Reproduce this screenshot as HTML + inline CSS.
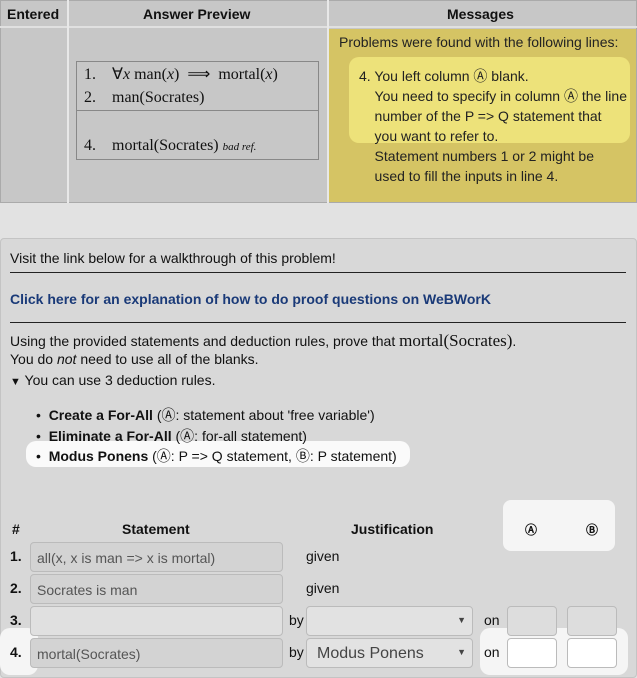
<!DOCTYPE html>
<html><head><style>
*{box-sizing:border-box;margin:0;padding:0}
body{width:637px;height:678px;overflow:hidden;background:#e2e2e2;font-family:"Liberation Sans",sans-serif;font-size:14px;color:#111;position:relative}
.a{position:absolute;white-space:nowrap}
.serif{font-family:"Liberation Serif",serif}
.inp{position:absolute;height:30px;border:1px solid #bbb;border-radius:4px;background:#d3d3d3;color:#555;font-size:14px;padding:7px 6px;line-height:16px}
.sel{position:absolute;height:30px;border:1px solid #bbb;border-radius:4px;background:#e2e2e2;padding:6px 10px;font-size:16px;color:#444}
.sel:after{content:"▼";position:absolute;right:6px;top:8px;font-size:9px;color:#444}
.box{position:absolute;width:50px;height:30px;border:1px solid #bbb;border-radius:4px;background:#ddd}
</style></head><body>
<div class="a" style="left:0;top:0;width:637px;height:203px;background:#c7c7c7;border:1px solid #aaa"></div>
<div class="a" style="left:0;top:0;width:637px;height:28px;border-bottom:2px solid #e0e0e0"></div>
<div class="a" style="left:67px;top:0;width:2px;height:203px;background:#e8e8e8"></div>
<div class="a" style="left:327px;top:0;width:2px;height:203px;background:#e8e8e8"></div>
<div class="a" style="left:329px;top:29px;width:307px;height:173px;background:#d5c464"></div>
<div class="a" style="left:7px;top:6px;font-weight:bold">Entered</div>
<div class="a" style="left:143px;top:6px;font-weight:bold">Answer Preview</div>
<div class="a" style="left:447px;top:6px;font-weight:bold">Messages</div>
<div class="a" style="left:76px;top:61px;width:243px;height:99px;border:1px solid #888"></div>
<div class="a" style="left:76px;top:110px;width:243px;height:1px;background:#888"></div>
<div class="a serif" style="left:84px;top:64px;font-size:16px">1.&nbsp;&nbsp;&nbsp;&nbsp;∀<i>x</i> man(<i>x</i>) &nbsp;⟹&nbsp; mortal(<i>x</i>)</div>
<div class="a serif" style="left:84px;top:89px;font-size:16px">2.&nbsp;&nbsp;&nbsp;&nbsp;man(Socrates)</div>
<div class="a serif" style="left:84px;top:137px;font-size:16px">4.&nbsp;&nbsp;&nbsp;&nbsp;mortal(Socrates) <i style="font-size:11px">bad ref.</i></div>
<div class="a" style="left:339px;top:34px;font-size:14px;color:#222">Problems were found with the following lines:</div>
<div class="a" style="left:349px;top:57px;width:281px;height:86px;background:#ede27a;border-radius:10px"></div>
<div class="a" style="left:359px;top:66px;font-size:14px;line-height:20px;color:#222">4. You left column Ⓐ blank.<br>&nbsp;&nbsp;&nbsp;&nbsp;You need to specify in column Ⓐ the line<br>&nbsp;&nbsp;&nbsp;&nbsp;number of the P =&gt; Q statement that<br>&nbsp;&nbsp;&nbsp;&nbsp;you want to refer to.<br>&nbsp;&nbsp;&nbsp;&nbsp;Statement numbers 1 or 2 might be<br>&nbsp;&nbsp;&nbsp;&nbsp;used to fill the inputs in line 4.</div>
<div class="a" style="left:0;top:238px;width:637px;height:440px;background:#d8d8d8;border:1px solid #c4c4c4;border-radius:4px"></div>
<div class="a" style="left:10px;top:250px">Visit the link below for a walkthrough of this problem!</div>
<div class="a" style="left:10px;top:272px;width:616px;height:1px;background:#222"></div>
<div class="a" style="left:10px;top:291px;font-weight:bold;color:#1a3a78">Click here for an explanation of how to do proof questions on WeBWorK</div>
<div class="a" style="left:10px;top:322px;width:616px;height:1px;background:#222"></div>
<div class="a" style="left:10px;top:331px">Using the provided statements and deduction rules, prove that <span class="serif" style="font-size:17px">mortal(Socrates)</span>.</div>
<div class="a" style="left:10px;top:351px">You do <i>not</i> need to use all of the blanks.</div>
<div class="a" style="left:10px;top:372px"><span style="font-size:11px">▼</span> You can use 3 deduction rules.</div>
<div class="a" style="left:26px;top:441px;width:384px;height:26px;background:#fafafa;border-radius:10px"></div>
<div class="a" style="left:36px;top:405px;line-height:20.5px">•&nbsp;&nbsp;<b>Create a For-All</b> (Ⓐ: statement about 'free variable')<br>•&nbsp;&nbsp;<b>Eliminate a For-All</b> (Ⓐ: for-all statement)<br>•&nbsp;&nbsp;<b>Modus Ponens</b> (Ⓐ: P =&gt; Q statement, Ⓑ: P statement)</div>
<div class="a" style="left:503px;top:500px;width:112px;height:51px;background:#f5f5f5;border-radius:8px"></div>
<div class="a" style="left:480px;top:628px;width:148px;height:47px;background:#f5f5f5;border-radius:10px"></div>
<div class="a" style="left:0;top:628px;width:38px;height:47px;background:#f5f5f5;border-radius:10px"></div>
<div class="a" style="left:12px;top:521px;font-weight:bold">#</div>
<div class="a" style="left:122px;top:521px;font-weight:bold">Statement</div>
<div class="a" style="left:351px;top:521px;font-weight:bold">Justification</div>
<div class="a" style="left:525px;top:521px;font-weight:bold;font-size:12px">Ⓐ</div>
<div class="a" style="left:586px;top:521px;font-weight:bold;font-size:12px">Ⓑ</div>
<div class="a" style="left:10px;top:548px;font-weight:bold">1.</div>
<div class="a" style="left:10px;top:580px;font-weight:bold">2.</div>
<div class="a" style="left:10px;top:612px;font-weight:bold">3.</div>
<div class="a" style="left:10px;top:644px;font-weight:bold">4.</div>
<div class="inp" style="left:30px;top:542px;width:253px">all(x, x is man =&gt; x is mortal)</div>
<div class="inp" style="left:30px;top:574px;width:253px">Socrates is man</div>
<div class="inp" style="left:30px;top:606px;width:253px;background:#e0e0e0"></div>
<div class="inp" style="left:30px;top:638px;width:253px">mortal(Socrates)</div>
<div class="a" style="left:306px;top:548px">given</div>
<div class="a" style="left:306px;top:580px">given</div>
<div class="a" style="left:289px;top:612px">by</div>
<div class="a" style="left:289px;top:644px">by</div>
<div class="sel" style="left:306px;top:606px;width:167px"></div>
<div class="sel" style="left:306px;top:638px;width:167px">Modus Ponens</div>
<div class="a" style="left:484px;top:612px">on</div>
<div class="a" style="left:484px;top:644px">on</div>
<div class="box" style="left:507px;top:606px"></div>
<div class="box" style="left:567px;top:606px"></div>
<div class="box" style="left:507px;top:638px;background:#fff"></div>
<div class="box" style="left:567px;top:638px;background:#fff"></div>
</body></html>
